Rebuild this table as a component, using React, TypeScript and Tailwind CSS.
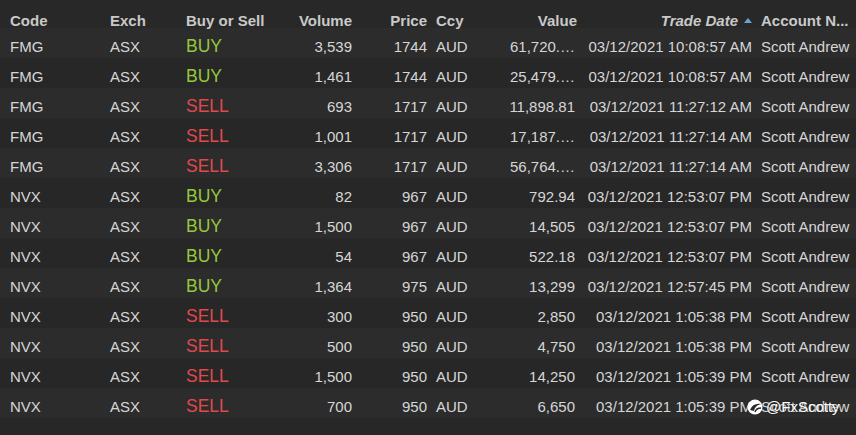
import React from 'react';

interface Trade {
  code: string
  side: 'BUY' | 'SELL'
  volume: string
  price: string
  value: string
  date: string
}

const trades: Trade[] = [
  { code: 'FMG', side: 'BUY', volume: '3,539', price: '1744', value: '61,720.…', date: '03/12/2021 10:08:57 AM' },
  { code: 'FMG', side: 'BUY', volume: '1,461', price: '1744', value: '25,479.…', date: '03/12/2021 10:08:57 AM' },
  { code: 'FMG', side: 'SELL', volume: '693', price: '1717', value: '11,898.81', date: '03/12/2021 11:27:12 AM' },
  { code: 'FMG', side: 'SELL', volume: '1,001', price: '1717', value: '17,187.…', date: '03/12/2021 11:27:14 AM' },
  { code: 'FMG', side: 'SELL', volume: '3,306', price: '1717', value: '56,764.…', date: '03/12/2021 11:27:14 AM' },
  { code: 'NVX', side: 'BUY', volume: '82', price: '967', value: '792.94', date: '03/12/2021 12:53:07 PM' },
  { code: 'NVX', side: 'BUY', volume: '1,500', price: '967', value: '14,505', date: '03/12/2021 12:53:07 PM' },
  { code: 'NVX', side: 'BUY', volume: '54', price: '967', value: '522.18', date: '03/12/2021 12:53:07 PM' },
  { code: 'NVX', side: 'BUY', volume: '1,364', price: '975', value: '13,299', date: '03/12/2021 12:57:45 PM' },
  { code: 'NVX', side: 'SELL', volume: '300', price: '950', value: '2,850', date: '03/12/2021 1:05:38 PM' },
  { code: 'NVX', side: 'SELL', volume: '500', price: '950', value: '4,750', date: '03/12/2021 1:05:38 PM' },
  { code: 'NVX', side: 'SELL', volume: '1,500', price: '950', value: '14,250', date: '03/12/2021 1:05:39 PM' },
  { code: 'NVX', side: 'SELL', volume: '700', price: '950', value: '6,650', date: '03/12/2021 1:05:39 PM' },
]

const App = () => {
  return (
    <div className="relative w-[856px] h-[435px] overflow-hidden bg-[#272727] text-[15px] text-[#d6d6d6] font-['Liberation_Sans',Arial,sans-serif]">
      {/* Header */}
      <div className="flex items-baseline h-[28px] pt-[12px] leading-[17px] bg-[#282828] font-bold text-[#c9c9c9]">
        <div className="w-[110px] pl-[10px]">Code</div>
        <div className="w-[76px]">Exch</div>
        <div className="w-[84px]">Buy or Sell</div>
        <div className="w-[82px] text-right">Volume</div>
        <div className="w-[75px] text-right">Price</div>
        <div className="w-[53px] pl-[9px]">Ccy</div>
        <div className="w-[97px] text-right">Value</div>
        <div className="w-[175px] flex items-center justify-end gap-[6px]">
          <span className="italic">Trade Date</span>
          <svg width="8" height="5" viewBox="0 0 8 5" className="mb-[1px]">
            <polygon points="4,0 8,5 0,5" fill="#6f9fd8" />
          </svg>
        </div>
        <div className="w-[104px] pl-[9px] whitespace-nowrap">Account N...</div>
      </div>

      {/* Rows */}
      {trades.map((t, i) => (
        <div
          key={i}
          className={`flex items-baseline h-[30px] pt-[10px] leading-[17px] whitespace-nowrap ${
            i % 2 === 0 ? 'bg-[#2c2c2c]' : 'bg-[#272727]'
          }`}
        >
          <div className="w-[110px] pl-[10px]">{t.code}</div>
          <div className="w-[76px]">ASX</div>
          <div
            className={`w-[84px] text-[17.5px] ${
              t.side === 'BUY' ? 'text-[#97c73b]' : 'text-[#e0494e]'
            }`}
          >
            {t.side}
          </div>
          <div className="w-[82px] text-right">{t.volume}</div>
          <div className="w-[75px] text-right">{t.price}</div>
          <div className="w-[53px] pl-[9px]">AUD</div>
          <div className="w-[97px] text-right pr-[2px]">{t.value}</div>
          <div className="w-[175px] text-right">{t.date}</div>
          <div className="w-[104px] pl-[9px]">Scott Andrew</div>
        </div>
      ))}

      {/* Watermark */}
      <div className="absolute left-[747px] top-[396px] flex items-center gap-[3px] text-white text-[15px] [text-shadow:0_0_2px_rgba(0,0,0,0.6)]">
        <svg width="16" height="16" viewBox="0 0 16 16">
          <circle cx="8" cy="8" r="7.5" fill="#ffffff" />
          <path d="M3 11 C5 6, 9 4, 14 5 C10 6, 8 8, 7 12 Z" fill="#2a2a2a" />
          <path d="M8 13 C9 10, 11 9, 14 9" stroke="#2a2a2a" strokeWidth="1.4" fill="none" />
        </svg>
        <span>@FxScotty</span>
      </div>
    </div>
  );
};

export default App;
